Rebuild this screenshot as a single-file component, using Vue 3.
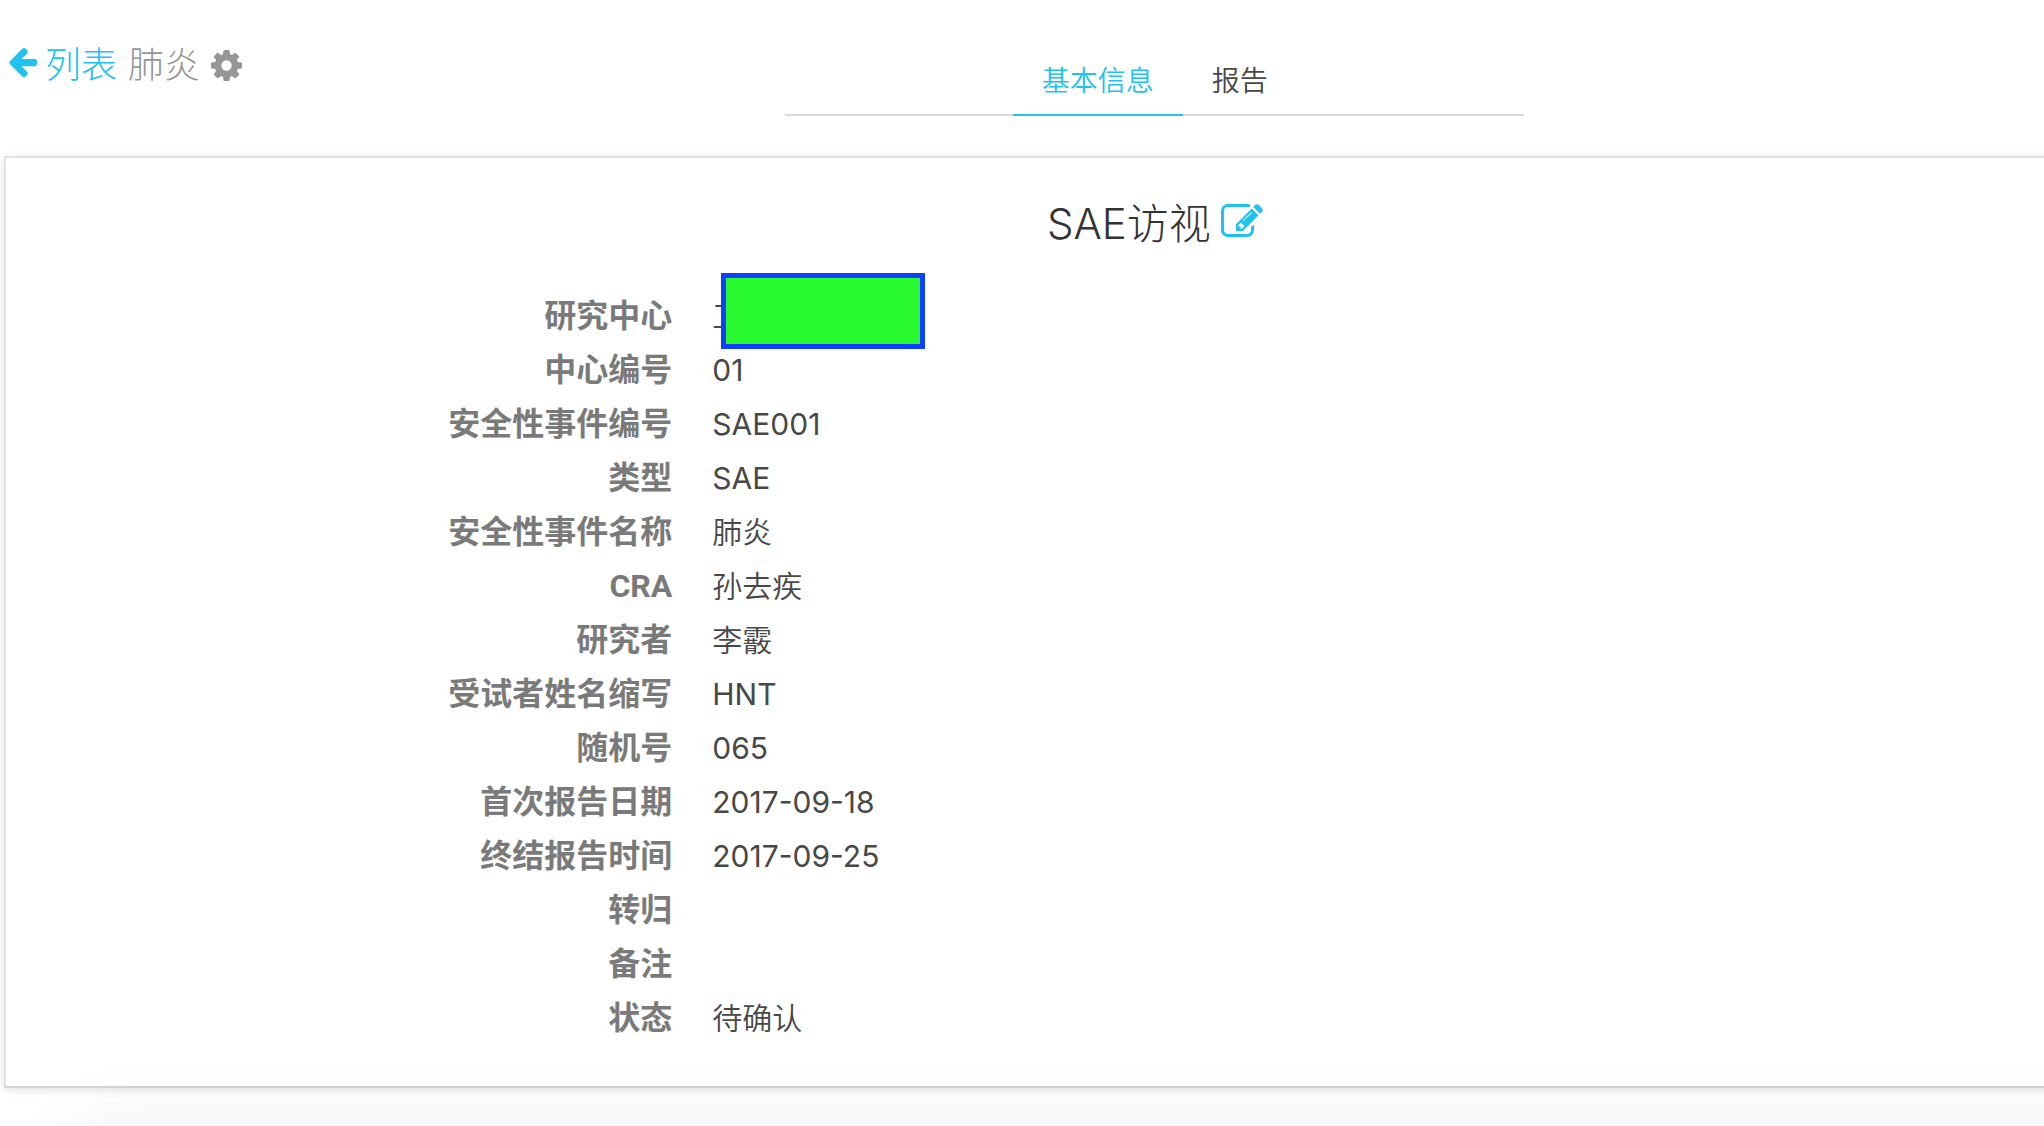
<script setup>
const tabs = [
  { name: '基本信息', active: true },
  { name: '报告', active: false },
]

const fields = [
  { label: '研究中心', value: '工', masked: true },
  { label: '中心编号', value: '01' },
  { label: '安全性事件编号', value: 'SAE001' },
  { label: '类型', value: 'SAE' },
  { label: '安全性事件名称', value: '肺炎' },
  { label: 'CRA', value: '孙去疾' },
  { label: '研究者', value: '李霰' },
  { label: '受试者姓名缩写', value: 'HNT' },
  { label: '随机号', value: '065' },
  { label: '首次报告日期', value: '2017-09-18' },
  { label: '终结报告时间', value: '2017-09-25' },
  { label: '转归', value: '' },
  { label: '备注', value: '' },
  { label: '状态', value: '待确认' },
]

const isLatin = (text) => /^[\w-]+$/.test(text)
</script>

<template>
  <div class="page">
    <div class="content">
      <header class="top">
        <div class="crumbs">
          <a class="back" href="#list">
            <svg class="arrow" viewBox="64 128 1600 1600" aria-hidden="true"><path d="M1664 896v128q0 53-32.5 90.5t-84.5 37.5h-704l293 294q38 36 38 90t-38 90l-75 76q-37 37-90 37-52 0-91-37l-651-652q-37-37-37-90 0-52 37-91l651-650q38-38 91-38 52 0 90 38l75 74q38 38 38 91t-38 91l-293 293h704q52 0 84.5 37.5t32.5 90.5z" /></svg>
            <span>列表</span>
          </a>
          <span>肺炎</span>
          <button class="icon-button settings" type="button" aria-label="设置">
            <svg viewBox="128 128 1536 1536" aria-hidden="true"><path d="M1152 896q0-106-75-181t-181-75-181 75-75 181 75 181 181 75 181-75 75-181zm512-109v222q0 12-8 23t-20 13l-185 28q-19 54-39 91 35 50 107 138 10 12 10 25t-9 23q-27 37-99 108t-94 71q-12 0-26-9l-138-108q-44 23-91 38-16 136-29 186-7 28-36 28h-222q-14 0-24.5-8.5t-11.5-21.5l-28-184q-49-16-90-37l-141 107q-10 9-25 9-14 0-25-11-126-114-165-168-7-10-7-23 0-12 8-23 15-21 51-66.5t54-70.5q-27-50-41-99l-183-27q-13-2-21-12.5t-8-23.5v-222q0-12 8-23t19-13l186-28q14-46 39-92-40-57-107-138-10-12-10-24 0-10 9-23 26-36 98.5-107.5t94.5-71.5q13 0 26 10l138 107q44-23 91-38 16-136 29-186 7-28 36-28h222q14 0 24.5 8.5t11.5 21.5l28 184q49 16 90 37l142-107q9-9 24-9 13 0 25 10 129 119 165 170 7 8 7 22 0 12-8 23-15 21-51 66.5t-54 70.5q26 50 41 98l183 28q13 2 21 12.5t8 23.5z" /></svg>
          </button>
        </div>
        <nav class="tabs">
          <a v-for="tab in tabs" :key="tab.name" href="#" class="tab" :class="{ active: tab.active }">{{ tab.name }}</a>
        </nav>
      </header>

      <main class="card">
        <h1 class="title">
          <span>SAE访视</span>
          <button class="icon-button edit" type="button" aria-label="编辑">
            <svg viewBox="0 128 1792 1408" aria-hidden="true"><path d="M888 1184l116-116-152-152-116 116v56h96v96h56zm440-720q-16-16-33 1l-350 350q-17 17-1 33t33-1l350-350q17-17 1-33zm80 594v190q0 119-84.5 203.5t-203.5 84.5h-832q-119 0-203.5-84.5t-84.5-203.5v-832q0-119 84.5-203.5t203.5-84.5h832q63 0 117 25 15 7 18 23 3 17-9 29l-49 49q-14 14-32 8-23-6-45-6h-832q-66 0-113 47t-47 113v832q0 66 47 113t113 47h832q66 0 113-47t47-113v-126q0-13 9-22l64-64q15-15 35-7t20 29zm-96-738l288 288-672 672h-288v-288zm444 132l-92 92-288-288 92-92q28-28 68-28t68 28l152 152q28 28 28 68t-28 68z" /></svg>
          </button>
        </h1>
        <dl class="fields">
          <div v-for="field in fields" :key="field.label" class="field">
            <dt>{{ field.label }}</dt>
            <dd :class="{ latin: isLatin(field.value) }">{{ field.value }}<span v-if="field.masked" class="mask"></span></dd>
          </div>
        </dl>
      </main>
    </div>
    <div class="bottom-shade"></div>
  </div>
</template>

<style>
body {
  background: #fff;
}
</style>

<style scoped>
.page {
  position: relative;
  min-height: 100vh;
  overflow: hidden;
  font-family: Inter, "Noto Sans CJK SC", sans-serif;
  font-weight: 300;
  color: #484848;
}

/* The sheet is wider than the window and runs off its right side. */
.content {
  width: 113%;
}

.top {
  display: grid;
  grid-template-columns: 1fr 32% 1fr;
  height: 156px;
}

.crumbs {
  display: flex;
  align-items: center;
  gap: 11px;
  height: 124px;
  padding-left: 7px;
  font-size: 36px;
  color: #969696;
}

.back {
  display: flex;
  align-items: center;
  gap: 8px;
  color: #21c2f0;
  text-decoration: none;
}

svg {
  display: block;
  fill: currentColor;
}

.arrow {
  width: 30px;
  height: 30px;
}

.icon-button {
  padding: 0;
  border: 0;
  background: none;
  color: inherit;
}

.settings {
  padding-top: 6px;
}

.settings svg {
  width: 31px;
  height: 31px;
}

.tabs {
  display: flex;
  justify-content: center;
  box-sizing: border-box;
  height: 116px;
  padding-top: 48px;
  padding-right: 68px;
  padding-left: 68px;
  border-bottom: 2px solid #dadada;
}

.tab {
  height: 66px;
  padding: 0 29px;
  border-bottom: 2px solid transparent;
  font-size: 28px;
  font-weight: 350;
  line-height: 66px;
  color: #484848;
  text-decoration: none;
}

.tab.active {
  border-color: #21c2f0;
  color: #21c2f0;
}

.card {
  margin: 0 4px;
  padding: 32px 0 41px;
  border: 2px solid #e2e2e2;
  border-bottom-color: #d4d4d4;
  box-shadow: 0 2px 8px rgba(0, 0, 0, 0.12);
}

.title {
  display: flex;
  justify-content: center;
  align-items: center;
  gap: 10px;
  height: 68px;
  margin: 0 0 31px;
  font-size: 42px;
  font-weight: 300;
  line-height: 68px;
  color: #333;
}

.edit {
  padding-bottom: 8px;
  color: #21c2f0;
}

.edit svg {
  width: 42px;
  height: 33px;
}

.fields {
  margin: 0;
}

.field {
  display: grid;
  grid-template-columns: 29% 1fr;
  column-gap: 40px;
  height: 54px;
  line-height: 54px;
}

dt {
  font-family: Roboto, "Noto Sans CJK SC", sans-serif;
  font-size: 32px;
  font-weight: 700;
  text-align: right;
  color: #7a7a7a;
}

dd {
  position: relative;
  margin: 0;
  font-size: 30px;
  font-weight: 350;
}

dd.latin {
  font-weight: 400;
}

.mask {
  position: absolute;
  top: -16px;
  left: 9px;
  box-sizing: border-box;
  width: 204px;
  height: 76px;
  border: 5px solid #1040ff;
  background: #29f92f;
}

.bottom-shade {
  position: absolute;
  top: 100%;
  right: -100px;
  left: 80px;
  height: 200px;
  box-shadow: 0 0 80px rgba(0, 0, 0, 0.07);
  pointer-events: none;
}
</style>
